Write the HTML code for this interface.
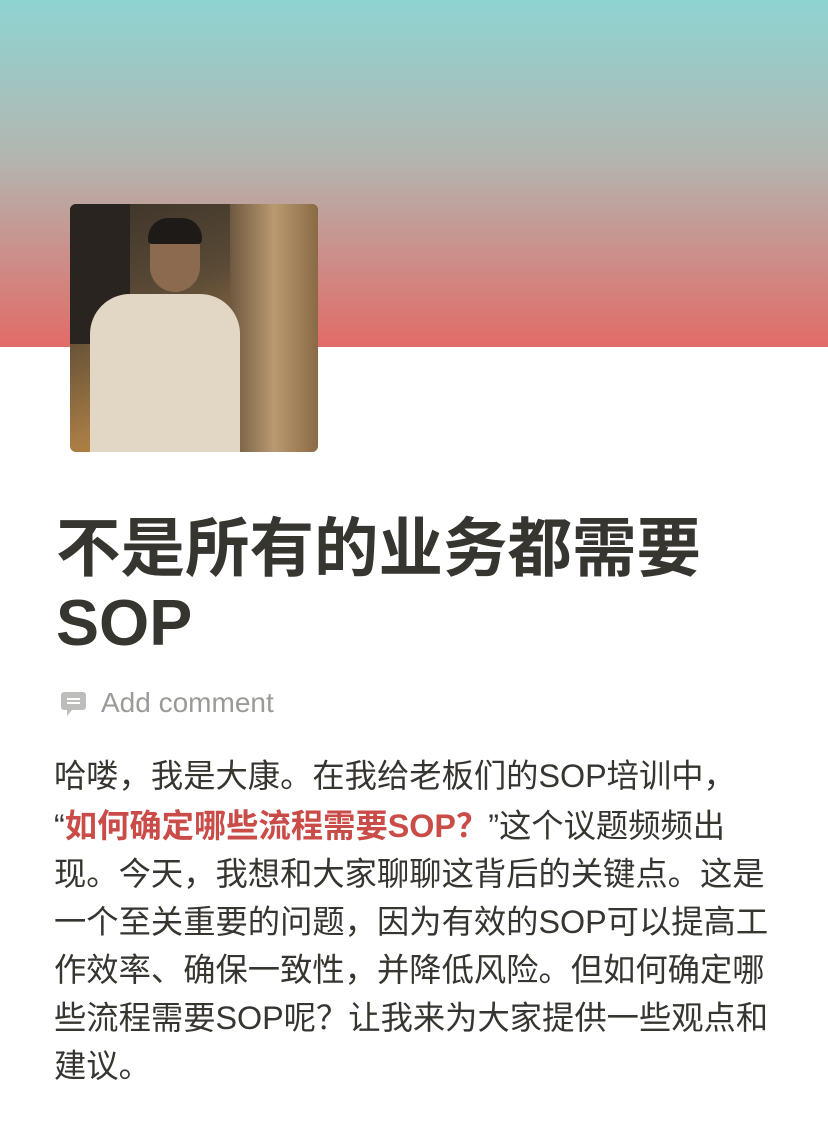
<!DOCTYPE html>
<html><head><meta charset="utf-8"><style>
html,body{margin:0;padding:0;width:828px;height:1123px;background:#fff;overflow:hidden;position:relative;font-family:"Liberation Sans","Noto Sans CJK SC",sans-serif}
.hdr{position:absolute;left:0;top:0;width:828px;height:347px;background:linear-gradient(#8ed4d2 0%,#b3b6b0 45%,#e26b67 100%)}
.photo{position:absolute;left:70px;top:204px;width:248px;height:248px;border-radius:6px;overflow:hidden;background:linear-gradient(160deg,#3a3228 0%,#5a4a36 35%,#a57a44 70%,#d6973e 100%)}
.t{position:absolute;left:56px;font-size:64.5px;font-weight:bold;color:#37352f;white-space:nowrap;line-height:70px}
.b{position:absolute;left:54px;font-size:32.3px;color:#37352f;white-space:nowrap;line-height:48px}
.r{color:#c94c48;font-weight:bold}
</style></head><body>
<div class="hdr"></div>
<div class="photo">
<div style="position:absolute;left:0;top:0;width:60px;height:140px;background:#2a2420"></div>
<div style="position:absolute;left:160px;top:0;width:88px;height:248px;background:linear-gradient(90deg,#6e5840,#b99a70,#8a6a45)"></div>
<div style="position:absolute;left:20px;top:90px;width:150px;height:158px;border-radius:40px 40px 0 0;background:#e2d6c4"></div>
<div style="position:absolute;left:80px;top:18px;width:50px;height:70px;border-radius:25px;background:#8b6a50"></div>
<div style="position:absolute;left:78px;top:14px;width:54px;height:26px;border-radius:20px 20px 4px 4px;background:#1e1a18"></div>
</div>
<div class="t" style="top:514px">不是所有的业务都需要</div>
<div class="t" style="top:588px">SOP</div>
<svg style="position:absolute;left:60px;top:691px" width="27" height="27" viewBox="0 0 27 27"><path d="M4 1h19a3 3 0 0 1 3 3v12a3 3 0 0 1-3 3H12l-5 6v-6H4a3 3 0 0 1-3-3V4a3 3 0 0 1 3-3z" fill="#bdbdbb"/><rect x="7" y="7" width="13" height="2" fill="#fff"/><rect x="7" y="11" width="13" height="2" fill="#fff"/></svg>
<div style="position:absolute;left:101px;top:686px;font-size:28px;color:#9b9a97;line-height:34px">Add comment</div>
<div class="b" style="top:752px">哈喽，我是大康。在我给老板们的SOP培训中，</div>
<div class="b" style="top:802px">“<span class="r">如何确定哪些流程需要SOP？</span>”这个议题频频出</div>
<div class="b" style="top:850px">现。今天，我想和大家聊聊这背后的关键点。这是</div>
<div class="b" style="top:898px">一个至关重要的问题，因为有效的SOP可以提高工</div>
<div class="b" style="top:946px">作效率、确保一致性，并降低风险。但如何确定哪</div>
<div class="b" style="top:994px">些流程需要SOP呢？让我来为大家提供一些观点和</div>
<div class="b" style="top:1042px">建议。</div>
</body></html>
